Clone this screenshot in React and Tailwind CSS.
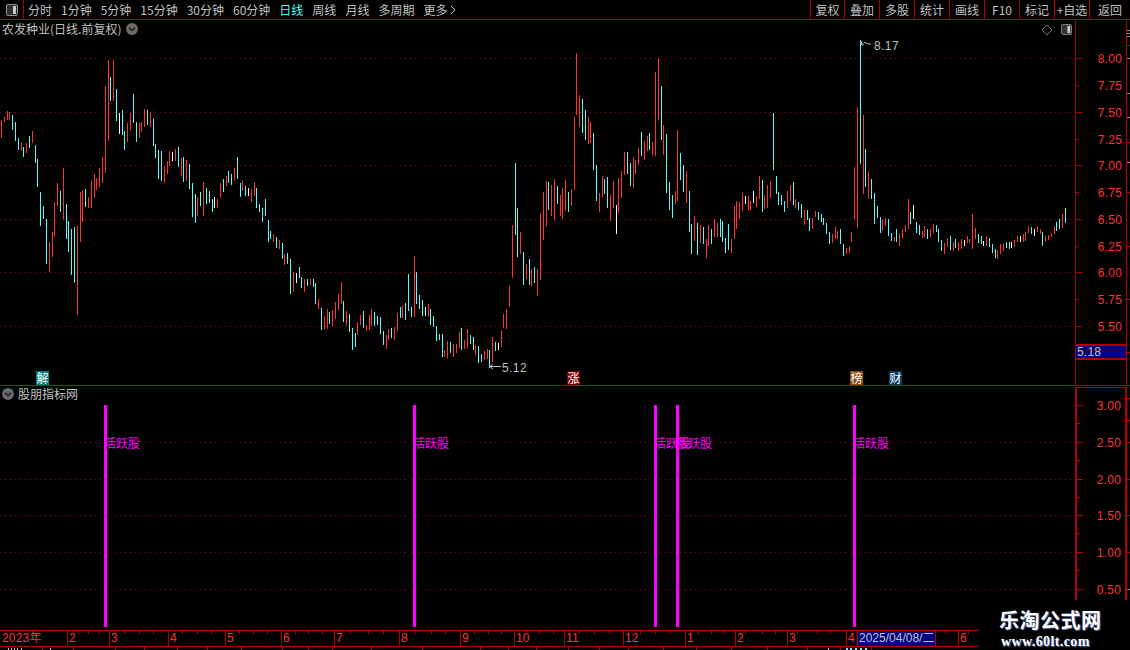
import React from "react";

const SEG = [
  [0, 50, "4r210-264 13r201-216 22r183-210 28r186-209 37c195-240 46c216-273 55c264-300 64r276-303 70c291-321 79r279-309 88c258-294 97r243-279 106c285-339 112c327-411 121c426-528 130c468-507 139c507-642 148r576-667 157r546-621 163r456-558 172r399-468 181c423-486 190r354-510 199c462-567 205c513-606 214c537-675 223c531-699 232r528-795 241r426-576 247r420-516 256c417-471 265r441-474 274r393-474 283r372-444 289r384-420 298r354-411 307r321-399 316r108-369 325r30-273 331c81-153 340r30-153 349c117-213 358w189-252 367c180-255 373c243-300 382r219-276 391r189-240 400c132-219 409c216-276 418r219-264 424r216-246 433r177-231 442c180-225 451r186-231 460c207-288 466c282-324 475c300-387 484c303-393 493r348-399 502r333-372 508r303-348 517w306-333 526r297-333 535c291-351 544r324-378 550c321-396 559r330-393 568c342-417 577c399-501 586c432-519 592r441-498 601c426-468 610r396-498 619c414-462 628c423-459 637c447-486 643w441-474 652r447-474 661r399-441 670c387-426 679r378-408 685c363-399 694c372-405 703r354-390 712c321-387 721c399-441 727r393-423 736c408-438 745w414-438 754r417-456 763r396-438 769c414-474 778c462-486 787c474-516 796c447-498 805c510-576"],
  [270, 160, "1c213-237 10r222-246 19c231-264 28r240-267 37c249-297 43r282-315 52c279-312 61c297-402 70r336-396 79w339-369 88c321-354 94c351-384 103r357-396 112c357-378 121r357-375 130c357-381 136c369-432 145r417-447 154c444-510 163r468-507 172r447-507 178c456-492 187r450-498 196r426-477 205r402-450 214r366-432 220c423-486 229r453-498 238c462-516 247c504-570 256c519-561 262r486-525 271r465-495 280c453-504 289r495-513 298r465-510 304r447-498 313c456-498 322c468-495 331c471-522 340c513-555 349r525-567 355r507-540 364c504-534 373r501-540 382r459-513 391c441-474 397r435-474 406c429-480 415c342-453 424c441-471 433r288-471 439c336-432 448c405-447 457c420-468 466w441-468 475r432-471 481c447-495 490c468-501 499c498-543 508c522-540 517c522-591 523r570-591 532r543-594 541c546-579 550r552-591 559r552-579 568r516-564 574c504-570 583r540-567 592r507-564 601c525-552 610c531-570 616r555-585 625c558-609 634c582-606 643r573-600 652r567-597 658c570-624 667r531-606 676c546-573 685w549-570 694r510-561 700r462-504 709r447-507 718r378-441 727r195-354 736c9-225 742c144-291 751r216-282 760c276-375 769r312-357 778c297-375 784r327-378 793c321-369 802r327-408"],
  [540, 40, "1r519-720 10r456-600 19r423-558 25c426-510 34r435-528 43r417-540 52c438-492 61r465-528 67r444-537 76r420-513 85c456-516 94r447-498 103r231-450 109r39-225 118r165-261 127c177-279 136c210-300 145r231-312 151r246-309 160c279-390 169c375-483 178r459-516 187r408-471 193c417-462 202c411-504 211r465-543 220r423-504 229w495-582 235r414-519 244r393-474 253r336-405 262c336-402 271c369-438 280r351-444 286r360-402 295r324-375 304c276-348 313r303-360 322r288-333 328c279-330 337r306-345 346r96-348 355r54-240 364c138-300 370r255-345 379c282-459 388c426-510 397c465-534 406r453-492 412r270-483 421c339-420 430c375-456 439r393-489 448c453-576 454c552-642 463r528-603 472c549-645 481r555-609 490c561-612 499r597-654 505r555-618 514c567-612 523r537-591 532r549-591 541c537-591 547c543-606 556c594-639 565c552-630 574r597-639 583r498-597 589r483-567 598r486-537 607r459-513 616w468-492 625r468-513 631r483-510 640w453-489 649r468-501 658r408-477 667c420-516 673r465-507 682r435-504 691r423-474 700c219-390 709c408-462 715c456-495 724c465-495 733c483-516 742r453-504 751r435-483 760c426-495 766r477-504 775c486-510 784c492-534 793r510-555 802c510-540 808c534-573"],
  [800, 30, "37r564-597 46r543-561 55c546-570 64c552-576 70c564-585 79c579-612 88c606-642 97r612-639 106r591-624 112r603-627 121c597-642 130c642-678 139r654-672 148r648-669 154r606-636 163r411-567 172r231-594 181c30-402 190r255-492 196c357-471 205r423-507 214c447-507 223c489-582 232c528-564 241c561-609 247r567-603 256r564-588 265c567-618 274c609-633 283r621-633 289c597-636 298r609-648 307r597-624 316r585-606 325r507-597 331c546-582 340w525-567 349c576-609 358c585-615 367r603-624 373r588-621 382c597-627 391r597-621 400r582-609 409c585-606 415c597-636 424c630-663 433r639-672 442r624-651 451c618-660 460r636-663 466c627-654 475r636-663 484r627-657 493w630-648 502r618-639 508r627-639 517r552-657 526r594-627 535c612-639 544c618-642 550w633-648 559r618-648 568c624-651 577c642-669 586c657-684 592r660-687 601r642-672 610r639-663 619c636-654 628c636-657 634w636-654 643r630-651 652r618-636 661w618-636 670r612-636 676r606-633 685r588-609 694c591-612 703w597-618 712r588-606 721r597-612 727c606-648 736r618-636 745r615-630 754r609-621 763r588-612 769c576-603 778c567-597 787r552-594 796c534-579"],
];
const COL = { r: "#ff3232", c: "#54fcfc", w: "#fcfcfc" };
const bars = SEG.flatMap(([x0, y0, s]) =>
  s.split(" ").map((t) => {
    const m = t.match(/^(\d+)([rcw])(\d+)-(\d+)$/);
    return {
      x: x0 + Math.floor(+m[1] / 3),
      y: y0 + Math.round(+m[3] / 3),
      h: Math.round((+m[4] - +m[3]) / 3),
      c: COL[m[2]],
    };
  })
);

const CJK = "font-['Noto_Sans_CJK_SC','Noto_Sans',sans-serif]";
const NUM = "font-['Liberation_Sans','Noto_Sans_CJK_SC',sans-serif]";

const LEFT_TABS = ["分时", "1分钟", "5分钟", "15分钟", "30分钟", "60分钟", "日线", "周线", "月线", "多周期", "更多"];
const RIGHT_TABS = [
  ["复权", 34], ["叠加", 35], ["多股", 35], ["统计", 35], ["画线", 35],
  ["F10", 35], ["标记", 35], ["+自选", 35], ["返回", 41],
];

const MAIN_AXIS = [["8.00", 38, 1], ["7.75", 65, 0], ["7.50", 92, 1], ["7.25", 119, 0], ["7.00", 145, 1], ["6.75", 172, 0], ["6.50", 199, 1], ["6.25", 226, 0], ["6.00", 252, 1], ["5.75", 279, 0], ["5.50", 306, 1]];
const SUB_AXIS = [["3.00", 17, 1], ["2.50", 54, 1], ["2.00", 91, 1], ["1.50", 127, 1], ["1.00", 164, 1], ["0.50", 201, 1]];
const MAGENTA = [104, 413, 654, 676, 853];
const TIME = [
  ["2023年", 0], ["2", 67], ["3", 109], ["4", 168], ["5", 225], ["6", 281], ["7", 334],
  ["8", 399], ["9", 460], ["10", 514], ["11", 564], ["12", 623], ["1", 685], ["2", 735], ["3", 787], ["4", 846], ["6", 958],
];
const TIME_TICKS = [78, 88, 99, 124, 139, 153, 182, 197, 211, 239, 253, 267, 295, 308, 322, 350, 368, 383, 414, 431, 445, 474, 488, 501, 526, 539, 553, 579, 594, 609, 640, 655, 670, 698, 711, 723, 745, 762, 775, 797, 817, 830, 945, 968];
const STATUS_DIV = [42, 73, 115, 144, 177, 207, 241, 282, 308, 332, 371, 422, 480, 508, 536, 568, 599, 628, 663, 696, 731, 767, 807, 840, 871];

function Chevron() {
  return (
    <svg viewBox="0 0 12 12" width="12" height="12">
      <circle cx="6" cy="6" r="6" fill="#6a6a6a" />
      <path d="M3 4.8 L6 7.6 L9 4.8" stroke="#1a1a1a" strokeWidth="1.4" fill="none" />
    </svg>
  );
}

function PanelIcon({ size = 12 }) {
  return (
    <svg viewBox="0 0 12 12" width={size} height={size}>
      <rect x="0.5" y="0.5" width="11" height="11" rx="1.5" fill="#333" stroke="#8a8a8a" />
      <rect x="7" y="2" width="3" height="8" fill="#c8c8c8" />
    </svg>
  );
}

function Grid({ ys, height }) {
  return (
    <svg width="1075" height={height} className="absolute left-0 top-0">
      {ys.map((y) => (
        <line key={y} x1="0" x2="1075" y1={y + 0.5} y2={y + 0.5} stroke="#9a0000" strokeWidth="1" strokeDasharray="1 4" shapeRendering="crispEdges" />
      ))}
    </svg>
  );
}

function Axis({ data, minor = [] }) {
  return (
    <>
      <svg width="49" height="100%" className="absolute left-0 top-0" shapeRendering="crispEdges">
        {data.map(([l, y, major]) => (
          <rect key={l} x="0" y={y} width={major ? 6 : 3} height="1" fill="#b00000" />
        ))}
        {minor.map((y) => (
          <rect key={y} x="0" y={y} width="3" height="1" fill="#b00000" />
        ))}
      </svg>
      {data.map(([l, y]) => (
        <span
          key={l}
          className={`absolute right-[4px] text-[12px] leading-[14px] tracking-[0.2px] text-[#ff3232] ${NUM}`}
          style={{ top: y - 6 }}
        >
          {l}
        </span>
      ))}
    </>
  );
}

function Strip({ marks, height }) {
  return (
    <svg width="3" height={height} shapeRendering="crispEdges">
      {marks.map(([y, c]) => (
        <rect key={y} x="0" y={y} width="3" height="1" fill={c} />
      ))}
    </svg>
  );
}

export default function App() {
  return (
    <div className={`relative flex h-[650px] w-[1130px] flex-col overflow-hidden bg-black text-[12px] text-[#c0c0c0] ${CJK}`}>
      {/* toolbar */}
      <div className="flex h-[20px] shrink-0 items-stretch border-b border-[#b00000]">
        <div className="flex w-[24px] items-center justify-center border-r border-[#b00000]">
          <PanelIcon />
        </div>
        <div className="flex flex-1 items-center gap-[9px] pl-[4px] leading-none">
          {LEFT_TABS.map((t) => (
            <span key={t} className={t === "日线" ? "text-[#54fcfc]" : ""}>{t}</span>
          ))}
          <svg width="6" height="10" viewBox="0 0 6 10" className="-ml-[6px]">
            <path d="M1 1 L5 5 L1 9" stroke="#c0c0c0" fill="none" />
          </svg>
        </div>
        <div className="flex">
          {RIGHT_TABS.map(([t, w]) => (
            <div key={t} className="flex items-center justify-center border-l border-[#b00000] leading-none" style={{ width: w }}>
              {t}
            </div>
          ))}
        </div>
      </div>

      {/* main pane */}
      <div className="flex h-[366px] shrink-0 border-b border-[#b00000]">
        <div className="relative w-[1075px] shrink-0">
          <Grid ys={[38, 92, 145, 199, 252, 306]} height={365} />
          <svg width="1075" height="365" className="absolute left-0 top-0" shapeRendering="crispEdges">
            {bars.map((b, i) => (
              <rect key={i} x={b.x} y={b.y - 20} width="1" height={b.h} fill={b.c} />
            ))}
          </svg>
          <div className="absolute left-[2px] top-[2px] flex items-center gap-[5px] leading-[14px]">
            <span>农发种业(日线.前复权)</span>
            <Chevron />
          </div>
          <svg width="12" height="12" viewBox="0 0 12 12" className="absolute left-[1041px] top-[4px]">
            <path d="M6 1 L11 6 L6 11 L1 6 Z" stroke="#7a7a7a" fill="none" />
          </svg>
          <div className="absolute left-[1061px] top-[4px] flex">
            <PanelIcon size={11} />
          </div>
          {/* high / low markers */}
          <svg width="20" height="10" className="absolute left-[860px] top-[19px]">
            <path d="M1 5 H4 M2 2 L1 5 L3 7 M4 3 L8 5 L11 5" stroke="#c0c0c0" fill="none" />
          </svg>
          <span className={`absolute left-[874px] top-[19px] text-[12px] leading-[14px] tracking-[0.4px] ${NUM}`}>8.17</span>
          <svg width="14" height="8" className="absolute left-[489px] top-[343px]">
            <path d="M1 3.5 H12 M4 1 L1 3.5 L4 6" stroke="#c0c0c0" fill="none" />
          </svg>
          <span className={`absolute left-[502px] top-[341px] text-[12px] leading-[14px] tracking-[0.4px] ${NUM}`}>5.12</span>
          {/* event badges */}
          <span className="absolute left-[36px] top-[351px] flex h-[14px] w-[13px] items-center justify-center bg-[#008080] text-[12px] leading-none text-white">解</span>
          <span className="absolute left-[567px] top-[351px] flex h-[14px] w-[13px] items-center justify-center bg-[#7a0000] text-[12px] leading-none text-white">涨</span>
          <span className="absolute left-[850px] top-[351px] flex h-[14px] w-[13px] items-center justify-center bg-[#8a4a10] text-[12px] leading-none text-white">榜</span>
          <span className="absolute left-[889px] top-[351px] flex h-[14px] w-[13px] items-center justify-center bg-[#0a3a66] text-[12px] leading-none text-white">财</span>
        </div>
        <div className="relative w-[52px] shrink-0 border-x border-[#b00000]">
          <Axis data={MAIN_AXIS} />
          <div className={`absolute left-0 right-0 top-[324px] flex h-[16px] items-center border-y-2 border-[#b00000] bg-[#000080] pl-[1px] text-[12px] tracking-[0.2px] text-[#c0c0c0] ${NUM}`}>
            5.18
          </div>
        </div>
        <div className="flex-1">
          <Strip height={365} marks={[[10, "#909090"], [13, "#909090"], [16, "#909090"], [25, "#b00000"], [38, "#909090"], [73, "#909090"], [97, "#909090"], [122, "#b00000"], [142, "#909090"], [172, "#b00000"], [226, "#b00000"], [279, "#b00000"], [332, "#b00000"]]} />
        </div>
      </div>

      {/* sub pane */}
      <div className="flex h-[244px] shrink-0">
        <div className="relative w-[1075px] shrink-0">
          <Grid ys={[56, 93, 129, 166, 203]} height={244} />
          <div className="absolute left-[2px] top-[1px] flex items-center gap-[4px] leading-[14px]">
            <Chevron />
            <span>股朋指标网</span>
          </div>
          {MAGENTA.map((x) => (
            <span key={x} className="absolute text-[12px] leading-[14px] text-[#ff00ff]" style={{ left: x, top: 50 }}>活跃股</span>
          ))}
          {MAGENTA.map((x) => (
            <div key={x} className="absolute top-[19px] h-[222px] w-[3px] bg-[#ff00ff]" style={{ left: x }} />
          ))}
        </div>
        <div className="relative mb-[30px] mt-[1px] w-[52px] shrink-0 border-x-2 border-t border-[#b00000]">
          <Axis data={SUB_AXIS} minor={[35, 72, 109, 145, 182]} />
        </div>
        <div className="flex-1">
          <Strip height={214} marks={[[12, "#b00000"], [34, "#b00000"], [56, "#b00000"], [93, "#b00000"], [129, "#b00000"], [166, "#b00000"], [203, "#909090"]]} />
        </div>
      </div>

      {/* time axis */}
      <div className={`relative h-[17px] w-[979px] shrink-0 border-y border-[#b00000] text-[12px] leading-[15px] tracking-[0.2px] text-[#ff3232] ${NUM}`}>
        {TIME.map(([t, x], i) => (
          <span key={i} className="absolute top-0 h-[15px] whitespace-nowrap pl-[2px]" style={{ left: x }}>
            {i > 0 && <i className="absolute left-0 top-0 h-[15px] w-px bg-[#b00000]" />}
            {t}
          </span>
        ))}
        {TIME_TICKS.map((x) => (
          <i key={x} className="absolute top-0 h-[3px] w-px bg-[#b00000]" style={{ left: x }} />
        ))}
        <span className="absolute left-[857px] top-0 h-[15px] w-[79px] overflow-hidden whitespace-nowrap border-x border-[#b00000] bg-[#000080] pl-[1px] text-[12px] tracking-[0px] text-[#c0c0c0]">2025/04/08/二</span>
      </div>

      {/* cut-off status row */}
      <div className="relative h-[3px] w-[979px] shrink-0">
        {STATUS_DIV.map((x) => (
          <i key={x} className="absolute top-0 h-[3px] w-px bg-[#b00000]" style={{ left: x }} />
        ))}
        {[8, 11, 14, 17, 21, 50, 828].map((x) => (
          <i key={x} className="absolute top-[1px] h-[2px] w-px bg-[#c0c0c0]" style={{ left: x }} />
        ))}
        {[846, 850, 855, 860, 865].map((x) => (
          <i key={x} className="absolute top-[1px] h-[2px] w-[2px] bg-[#54fcfc]" style={{ left: x }} />
        ))}
      </div>

      {/* watermark */}
      <div className="absolute left-[980px] top-[601px] h-[49px] w-[150px] bg-black">
        <div className="absolute left-[19px] top-[6px] whitespace-nowrap text-[20px] font-bold leading-[26px] tracking-[0.5px] text-white [text-shadow:1px_1px_1px_#556699]">乐淘公式网</div>
        <div className="absolute left-[21px] top-[33px] whitespace-nowrap font-['Liberation_Serif',serif] text-[14px] font-bold leading-[16px] tracking-[0.4px] text-white [text-shadow:1px_1px_1px_#556699]">www.60lt.com</div>
      </div>
    </div>
  );
}
